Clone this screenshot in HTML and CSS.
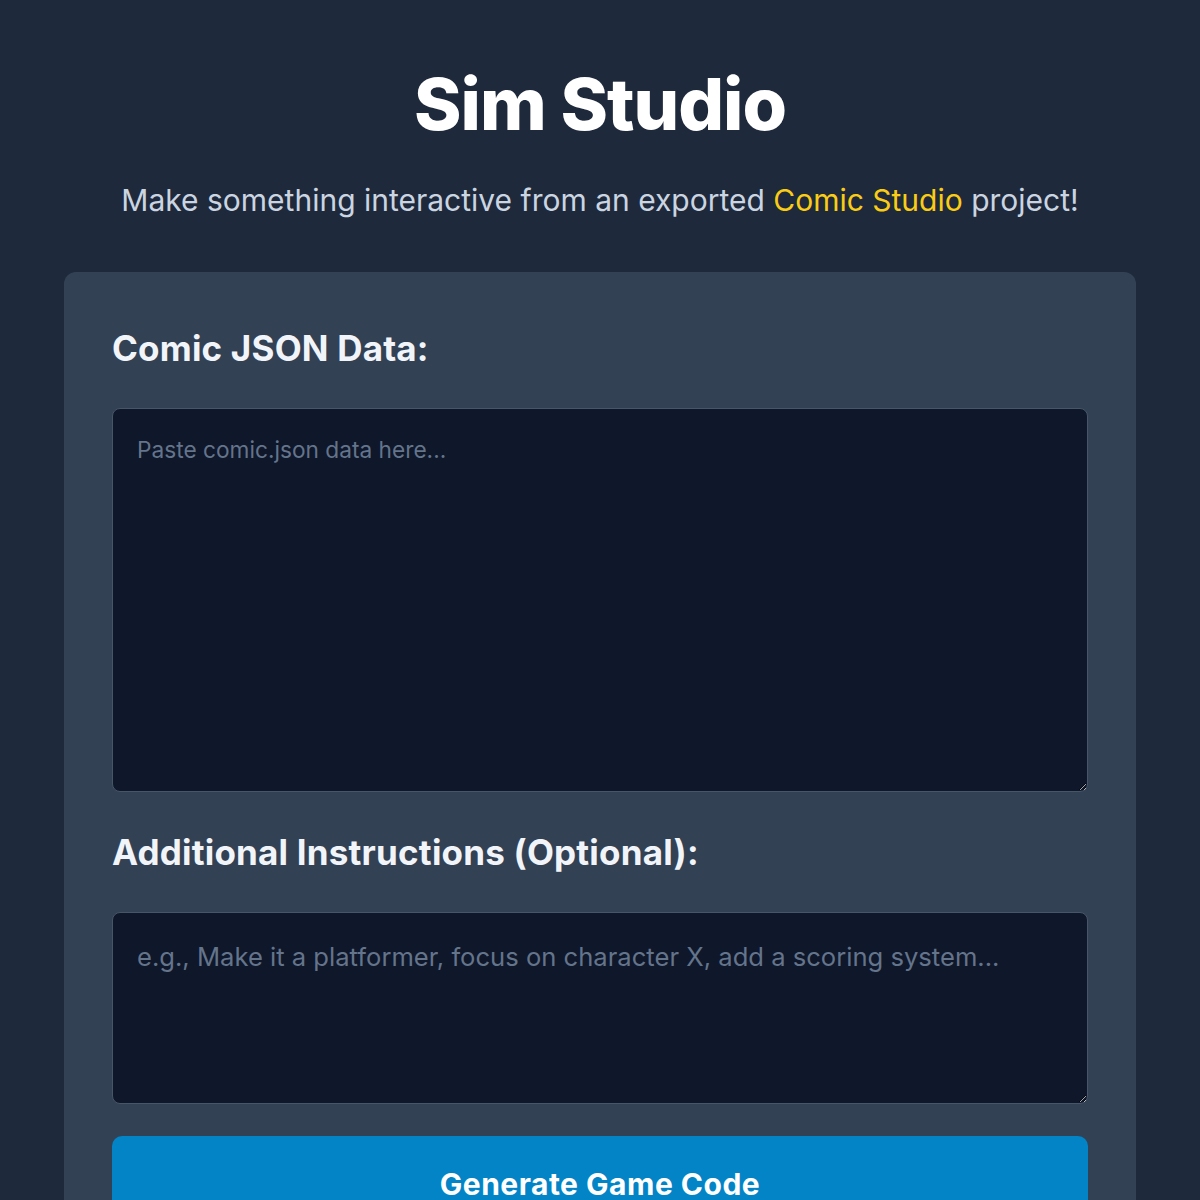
FILE: index.html
```html
<!DOCTYPE html>
<html lang="en">
<head>
<meta charset="utf-8">
<title>Sim Studio</title>
<link rel="stylesheet" href="styles.css">
</head>
<body>
<main class="page">
  <header class="hero">
    <h1 class="title">Sim Studio</h1>
    <p class="subtitle">Make something interactive from an exported <span class="accent">Comic Studio</span> project!</p>
  </header>
  <section class="card">
    <div class="field">
      <label class="label" for="json">Comic JSON Data:</label>
      <textarea id="json" class="input input-large" placeholder="Paste comic.json data here..."></textarea>
    </div>
    <div class="field">
      <label class="label" for="extra">Additional Instructions (Optional):</label>
      <textarea id="extra" class="input input-small" placeholder="e.g., Make it a platformer, focus on character X, add a scoring system..."></textarea>
    </div>
    <button class="btn" type="button">Generate Game Code</button>
  </section>
</main>
</body>
</html>
```
FILE: styles.css
```css
* { box-sizing: border-box; }
html, body { margin: 0; padding: 0; }
body {
  background: #1e293b;
  font-family: Inter, "Noto Sans", "Liberation Sans", sans-serif;
  color: #f1f5f9;
}
.page {
  max-width: 1072px;
  margin: 0 auto;
  padding-top: 64px;
}
.hero {
  text-align: center;
  margin-bottom: 52px;
}
.title {
  margin: 0;
  font-size: 72px;
  line-height: 80px;
  font-weight: 800;
  letter-spacing: -1px;
  color: #ffffff;
}
.subtitle {
  margin: 36px 0 0;
  font-size: 30px;
  line-height: 40px;
  color: #cbd5e1;
}
.accent { color: #facc15; }
.card {
  background: #334155;
  border-radius: 12px;
  padding: 48px;
  display: flex;
  flex-direction: column;
  gap: 32px;
}
.field {
  display: flex;
  flex-direction: column;
  gap: 32px;
}
.label {
  font-size: 35px;
  line-height: 56px;
  font-weight: 700;
  letter-spacing: 0.2px;
  color: #f1f5f9;
}
.input {
  display: block;
  width: 100%;
  background: #0f172a;
  border: 1px solid #475569;
  border-radius: 8px;
  padding: 25px 24px 20px;
  font-family: Inter, "Noto Sans", sans-serif;
  color: #e2e8f0;
  resize: vertical;
}
.input::placeholder { color: #64748b; }
.input-large { height: 384px; font-size: 22.7px; line-height: 32px; }
.input-small { height: 192px; font-size: 25.6px; line-height: 36px; padding-top: 26px; }
.btn {
  width: 100%;
  height: 96px;
  border: none;
  border-radius: 10px;
  background: #0284c7;
  color: #ffffff;
  font-family: Inter, "Noto Sans", sans-serif;
  font-size: 30px;
  font-weight: 700;
  letter-spacing: 0.5px;
  padding-top: 0;
}
```
